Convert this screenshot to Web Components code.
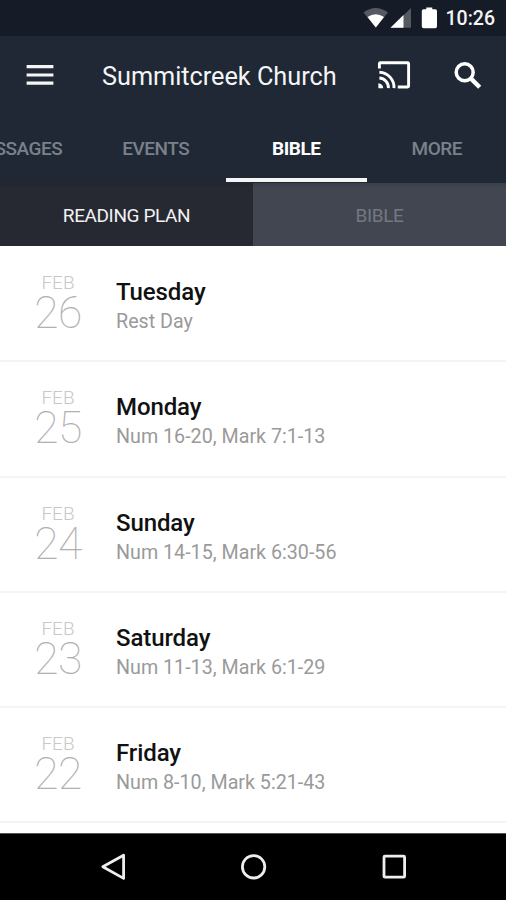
<!DOCTYPE html>
<html lang="en">
<head>
<meta charset="utf-8">
<title>Summitcreek Church</title>
<style>
html,body{margin:0;padding:0}
body{width:506px;height:900px;overflow:hidden;background:#fff;font-family:Roboto,"Liberation Sans",sans-serif}
</style>
</head>
<body>
<church-app></church-app>
<script>
const define = (name, css, html) => customElements.define(name, class extends HTMLElement {
  constructor() {
    super();
    this.attachShadow({mode: 'open'}).innerHTML = `<style>*{box-sizing:border-box}svg{display:block}${css}</style>${html}`;
  }
});

define('status-bar', `
  :host{display:flex;height:36px;background:#161c27;align-items:center;justify-content:flex-end;padding-right:11px;box-sizing:border-box;color:#f4f4f4}
  span{font-size:19.5px;font-weight:500;line-height:36px;margin-left:9px;padding-top:2px}`,
  `<svg width="74" height="36" viewBox="0 0 74 36">
    <path d="M0.5 12.5Q12.5 3.5 25 12.5L12.8 27.5Z" fill="#555962"/>
    <path d="M4.5 17Q12.8 11.5 21 17L12.8 27.5Z" fill="#fff"/>
    <path d="M27.5 27.7L48 8V27.7Z" fill="#555962"/>
    <path d="M27.5 27.7L40.5 15V27.7Z" fill="#fff"/>
    <path d="M63.3 7.4H69.3V9.2H72.3Q74 9.2 74 11V26.2Q74 28.2 72.2 28.2H60.6Q58.8 28.2 58.8 26.2V11Q58.8 9.2 60.6 9.2H63.3Z" fill="#fff"/>
  </svg><span>10:26</span>`);

define('app-toolbar', `
  :host{display:flex;height:79px;background:#1f2834;align-items:center;box-sizing:border-box;padding:0 24px 0 26px;color:#f3f5f6}
  h1{flex:1;margin:0 0 0 48px;padding-top:2px;font-size:25.3px;font-weight:400;line-height:79px;white-space:nowrap;letter-spacing:-.03px}
  .search{margin-left:43px}`,
  `<svg width="28" height="79" viewBox="0 0 28 79"><path d="M.6 30.7H27.4M.6 39H27.4M.6 47.2H27.4" stroke="#f5f5f5" stroke-width="3.2"/></svg>
  <h1><slot></slot></h1>
  <svg width="34" height="79" viewBox="0 0 34 79" fill="none" stroke="#fff" stroke-width="2.9">
    <path d="M2.4 32.5V27.7Q2.4 26.8 3.4 26.8H30.6Q31.6 26.8 31.6 27.8V50Q31.6 51 30.6 51H20.8"/>
    <path d="M2.4 36.2A15.2 15.2 0 0 1 17 52.2M2.4 42A9.6 9.6 0 0 1 11.4 52.2"/>
    <path d="M1.4 47.2A5 5 0 0 1 6.2 52.2H1.4Z" fill="#fff" stroke="none"/>
  </svg>
  <svg class="search" width="28" height="79" viewBox="0 0 28 79" fill="none" stroke="#fff"><circle cx="10.7" cy="36.3" r="8.5" stroke-width="3.5"/><path d="M17 42.6L25.7 51.2" stroke-width="4.4"/></svg>`);

define('nav-tab', `
  :host{display:flex;flex:none;width:140.5px;height:67px;box-sizing:border-box;justify-content:center;border-bottom:4px solid transparent;font-size:19px;font-weight:500;line-height:67px;color:#7a818c;letter-spacing:-.5px}
  :host([selected]){color:#fff;font-weight:700;border-bottom-color:#f5f5f5}
  span{white-space:nowrap}`,
  `<span><slot></slot></span>`);

define('nav-tabs', `
  :host{display:flex;height:68px;background:#1f2834;overflow:hidden;box-sizing:border-box}
  .strip{display:flex;flex:none;margin-left:-55px}`,
  `<div class="strip"><slot></slot></div>`);

define('segment-tab', `
  :host{display:block;flex:1;height:63px;text-align:center;font-size:19px;line-height:65px;letter-spacing:-.4px;color:#737883;background:linear-gradient(#393f4a,#414651 5px)}
  :host([selected]){color:#f2f2f2;background:linear-gradient(#22262f,#272932 5px)}`,
  `<slot></slot>`);

define('segment-bar', `:host{display:flex;height:63px;background:#414651}`, `<slot></slot>`);

define('plan-row', `
  :host{display:flex;height:115.3px;box-sizing:border-box;border-bottom:2px solid #f4f4f4;background:#fff}
  .date{width:116px;flex:none;text-align:center;color:#c6c6c6;padding-top:25px}
  .month{font-size:19px;font-weight:300;line-height:22px;color:#c8c8c8}
  .num{font-size:44.5px;font-weight:100;line-height:38px;color:#b0b0b0;letter-spacing:-.5px}
  .info{padding-top:30px}
  .day{font-size:24px;font-weight:500;line-height:30px;color:#111;letter-spacing:-.1px}
  .read{font-size:19.7px;line-height:30px;color:#9a9a9a;white-space:nowrap}`,
  `<div class="date"><div class="month"><slot name="month"></slot></div><div class="num"><slot name="num"></slot></div></div>
   <div class="info"><div class="day"><slot name="day"></slot></div><div class="read"><slot></slot></div></div>`);

define('system-nav', `
  :host{display:block;height:67px;background:#000;border-top:1px solid #555;box-sizing:border-box}`,
  `<svg width="506" height="66" viewBox="0 834 506 66" fill="none" stroke="#eee" stroke-width="2.8" stroke-linejoin="round">
    <path d="M123.6 855.2V878.4L102.8 866.8Z"/><circle cx="253.6" cy="866.8" r="11.2"/><rect x="384" y="856.2" width="20.6" height="21" rx="1"/>
  </svg>`);

define('church-app', `
  :host{display:flex;flex-direction:column;width:506px;height:900px;overflow:hidden}
  main{height:587px;flex:none;overflow:hidden;background:#fff;padding-top:1px}`,
  `<status-bar></status-bar>
  <app-toolbar>Summitcreek Church</app-toolbar>
  <nav-tabs><nav-tab>MESSAGES</nav-tab><nav-tab>EVENTS</nav-tab><nav-tab selected>BIBLE</nav-tab><nav-tab>MORE</nav-tab></nav-tabs>
  <segment-bar><segment-tab selected>READING PLAN</segment-tab><segment-tab>BIBLE</segment-tab></segment-bar>
  <main>${[['26','Tuesday','Rest Day'],['25','Monday','Num 16-20, Mark 7:1-13'],['24','Sunday','Num 14-15, Mark 6:30-56'],['23','Saturday','Num 11-13, Mark 6:1-29'],['22','Friday','Num 8-10, Mark 5:21-43']]
    .map(([n, d, r]) => `<plan-row><span slot="month">FEB</span><span slot="num">${n}</span><span slot="day">${d}</span>${r}</plan-row>`).join('')}</main>
  <system-nav></system-nav>`);
</script>
</body>
</html>
